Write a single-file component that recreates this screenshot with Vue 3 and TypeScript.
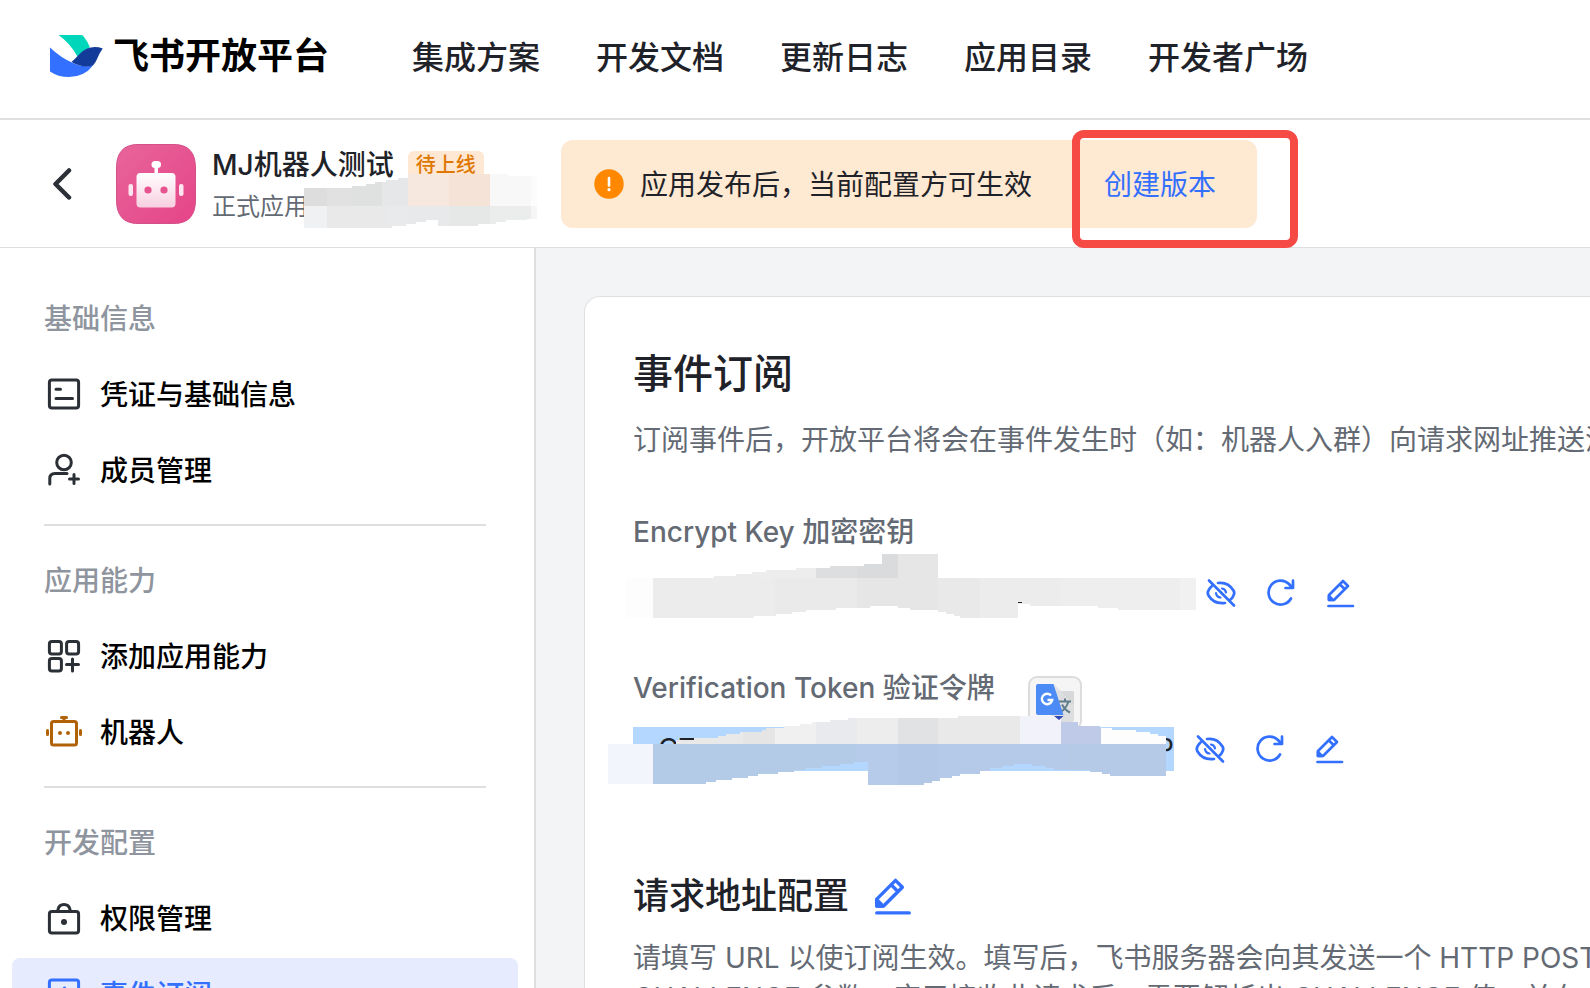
<script setup lang="ts">
interface NavItem {
  label: string
  icon: 'card' | 'member' | 'grid' | 'robot' | 'lock' | 'event'
  active?: boolean
}
interface NavGroup {
  title: string
  items: NavItem[]
}
type Cell = [x: number, y: number, w: number, h: number, fill: string]

const topLinks: string[] = ['集成方案', '开发文档', '更新日志', '应用目录', '开发者广场']

const groups: NavGroup[] = [
  {
    title: '基础信息',
    items: [
      { label: '凭证与基础信息', icon: 'card' },
      { label: '成员管理', icon: 'member' },
    ],
  },
  {
    title: '应用能力',
    items: [
      { label: '添加应用能力', icon: 'grid' },
      { label: '机器人', icon: 'robot' },
    ],
  },
  {
    title: '开发配置',
    items: [
      { label: '权限管理', icon: 'lock' },
      { label: '事件订阅', icon: 'event', active: true },
    ],
  },
]

const appCells: Cell[] = [
  [0, 0, 23, 32, '#dddddd'], [23, 0, 25, 32, '#e1e1e2'], [48, 0, 30, 32, '#dfe0e0'],
  [78, 0, 26, 32, '#e5e7e8'], [104, 0, 41, 32, '#f6e8df'], [145, 0, 41, 32, '#f5e3d8'],
  [186, 0, 41, 32, '#f8f8f9'], [227, 0, 6, 32, '#fcfcfc'],
  [0, 32, 23, 22, '#f0f1f2'], [23, 32, 60, 22, '#e9e9ea'], [83, 32, 21, 22, '#e8eaec'],
  [104, 32, 41, 22, '#e8e9ea'], [145, 32, 41, 22, '#e6e7e7'], [186, 32, 41, 22, '#ebecec'],
  [227, 32, 6, 22, '#f6f6f6'],
]

const keyCells: Cell[] = [
  [0, 24, 27, 40, '#fdfdfd'], [27, 16, 122, 48, '#ececec'], [130, 12, 60, 12, '#ededee'],
  [149, 24, 82, 40, '#e9eae9'], [190, 10, 41, 14, '#dddee0'], [231, 0, 41, 24, '#dadbdd'],
  [231, 24, 81, 40, '#e6e6e6'], [272, 0, 40, 24, '#e6e6e6'], [312, 24, 42, 40, '#e9e9e9'],
  [354, 24, 80, 40, '#ececec'], [434, 24, 120, 40, '#eeeeee'], [554, 24, 16, 40, '#f1f1f1'],
]

const tokenCells: Cell[] = [
  [45, 0, 90, 28, '#e9e9e9'], [135, 0, 32, 28, '#e5e5e5'], [167, 0, 41, 28, '#f0f0f0'],
  [208, 0, 41, 28, '#e9eaed'], [249, 0, 41, 28, '#ededed'], [290, 0, 40, 28, '#e1e2e4'],
  [330, 0, 40, 28, '#e8e9e8'], [370, 0, 42, 28, '#e9e9e9'], [412, 0, 41, 28, '#f2f3fa'],
  [453, 0, 40, 28, '#bfcae8'], [493, 0, 65, 28, '#fdfdfd'],
  [0, 28, 45, 41, '#f2f6fc'], [45, 28, 204, 41, '#b4cbe8'], [249, 28, 41, 41, '#b6cbea'],
  [290, 28, 40, 41, '#b3c8e7'], [330, 28, 130, 41, '#b5cae9'], [460, 28, 98, 41, '#b4cae7'],
]

const secrets = [
  { id: 'key', label: 'Encrypt Key 加密密钥' },
  { id: 'token', label: 'Verification Token 验证令牌' },
]
</script>

<template>
  <div class="page">
    <header class="topbar">
      <a class="brand" href="#">
        <svg class="logo" viewBox="0 0 53 42" aria-hidden="true">
          <path d="M8.500 0H31Q33 0 34 2Q38 7 40 12.500Q34 15 27.500 21.500Q20 8 8.500 0Z" fill="#00d6b9" />
          <path d="M0 12.500Q11 23 23 28Q34 33 43 30.500Q34 42 19 42Q8 42 0 36.500Z" fill="#3370ff" />
          <path d="M21.500 27Q26 23 30 18.500Q40 9 52.800 13.500Q50 17 47.500 23Q45.500 28 43 30.500Q33 33.500 21.500 27Z" fill="#133c9a" />
        </svg>
        <span>飞书开放平台</span>
      </a>
      <nav class="topnav">
        <a v-for="l in topLinks" :key="l" href="#">{{ l }}</a>
      </nav>
    </header>

    <div class="appbar">
      <button class="back" aria-label="返回">
        <svg viewBox="0 0 20 32"><path d="M17 2.500L3.500 16L17 29.500" fill="none" stroke="#2b2f36" stroke-width="4.500" stroke-linecap="round" stroke-linejoin="round" /></svg>
      </button>
      <svg class="avatar" viewBox="0 0 80 80" aria-hidden="true">
        <defs>
          <linearGradient id="pink" x1="0" y1="0" x2="1" y2="1"><stop offset="0" stop-color="#e8659a" /><stop offset="1" stop-color="#e54488" /></linearGradient>
          <linearGradient id="face" x1="0" y1="0" x2="0" y2="1"><stop offset="0" stop-color="#fff" /><stop offset="1" stop-color="#f8cfe0" /></linearGradient>
        </defs>
        <path d="M22 .5H58Q79.500 .5 79.500 24V56Q79.500 79.500 58 79.500H22Q.5 79.500 .5 56V24Q.5 .5 22 .5Z" fill="url(#pink)" stroke="#d4508a" />
        <rect x="20.500" y="29" width="39" height="34.500" rx="4" fill="url(#face)" />
        <rect x="38.500" y="20" width="3.500" height="10" fill="#fff" />
        <rect x="35.500" y="17" width="9.500" height="7" rx="3.500" fill="#fff" />
        <rect x="12.500" y="40" width="4.500" height="12" rx="2" fill="#fde6f0" />
        <rect x="63" y="40" width="4.500" height="12" rx="2" fill="#fde6f0" />
        <circle cx="32" cy="46" r="3.600" fill="#e5548e" /><circle cx="48" cy="46" r="3.600" fill="#e5548e" />
      </svg>
      <div class="appinfo">
        <div class="apptitle"><strong>MJ机器人测试</strong><span class="tag">待上线</span></div>
        <div class="appsub">正式应用</div>
        <svg class="mosaic mosaic-app" viewBox="0 0 233 54" aria-hidden="true">
          <clipPath id="clip-app"><path d="M0 14H48V12H62V10H71V8H82V6H94V4H104V0H204V2H233V45H223V46H202V48H192V50H174V52H134V46H122V48H112V50H102V52H88V54H0Z" /></clipPath>
          <g clip-path="url(#clip-app)" shape-rendering="crispEdges">
            <rect v-for="(c, i) in appCells" :key="i" :x="c[0]" :y="c[1]" :width="c[2]" :height="c[3]" :fill="c[4]" />
          </g>
        </svg>
      </div>
      <div class="notice" role="status">
        <svg class="warn" viewBox="0 0 32 32" aria-hidden="true"><circle cx="16" cy="16" r="14.700" fill="#ff8800" /><path d="M16 10V17.500" stroke="#fff" stroke-width="2.600" stroke-linecap="round" /><circle cx="16" cy="21.700" r="1.600" fill="#fff" /></svg>
        <span class="notice-text">应用发布后，当前配置方可生效</span>
        <a class="create" href="#">创建版本</a>
      </div>
    </div>

    <div class="body">
      <aside class="side">
        <section v-for="g in groups" :key="g.title" class="group">
          <h2>{{ g.title }}</h2>
          <a v-for="it in g.items" :key="it.label" href="#" class="item" :class="{ active: it.active, orange: it.icon === 'robot' }">
            <svg viewBox="0 0 36 36" fill="none" stroke="currentColor" stroke-width="3" stroke-linecap="round" stroke-linejoin="round" aria-hidden="true">
              <template v-if="it.icon === 'card'">
                <rect x="3.400" y="4" width="29.200" height="28" rx="2.500" /><path d="M10 13.200H14.500M10 22.500H26.500" />
              </template>
              <template v-else-if="it.icon === 'member'">
                <circle cx="18" cy="10.500" r="7.300" /><path d="M3.800 32V26.500Q3.800 21.500 9 21.500H21M23.500 27H32.500M28 22.500V31.500" />
              </template>
              <template v-else-if="it.icon === 'grid'">
                <rect x="3.400" y="3.400" width="12" height="12.500" rx="2.500" /><rect x="20.600" y="3.400" width="12" height="12.500" rx="2.500" /><rect x="3.400" y="20.500" width="12" height="12.500" rx="2.500" /><path d="M20.500 26.600H32.500M26.500 21V33" />
              </template>
              <template v-else-if="it.icon === 'robot'">
                <rect x="5.500" y="7.500" width="25" height="23.500" rx="2" /><path d="M15.500 3.500H20.500M18 3.500V7M1.500 16.500V20.500M34.500 16.500V20.500" />
                <circle cx="14" cy="19" r="2" fill="currentColor" stroke="none" /><circle cx="22" cy="19" r="2" fill="currentColor" stroke="none" />
              </template>
              <template v-else-if="it.icon === 'lock'">
                <rect x="3.400" y="11.500" width="29.200" height="21.500" rx="2.500" /><path d="M12 11V9.500Q13 4.500 18 4.500Q23 4.500 24 9.500V11" /><circle cx="18" cy="22" r="3" fill="currentColor" stroke="none" />
              </template>
              <template v-else>
                <rect x="3.400" y="4" width="29.200" height="28" rx="2.500" /><path d="M18.500 12L13 19H22L17 26" />
              </template>
            </svg>
            <span>{{ it.label }}</span>
          </a>
        </section>
      </aside>

      <main class="main">
        <div class="card">
          <h1>事件订阅</h1>
          <p class="lead">订阅事件后，开放平台将会在事件发生时（如：机器人入群）向请求网址推送消息</p>

          <section v-for="s in secrets" :key="s.id" class="secret">
            <h3>{{ s.label }}</h3>
            <div class="row">
              <div class="value" :class="s.id">
                <template v-if="s.id === 'key'">
                  <svg class="mosaic mosaic-key" viewBox="0 0 570 64" aria-hidden="true">
                    <clipPath id="clip-key"><path d="M0 24H88V22H110V20H126V18H140V16H170V14H204V12H238V10H256V0H312V24H570V56H492V54H472V52H404V50H392V64H334V62H328V60H320V58H312V56H284V54H272V52H244V54H210V56H180V58H166V60H150V62H128V64H0Z" /></clipPath>
                    <g clip-path="url(#clip-key)" shape-rendering="crispEdges">
                      <rect v-for="(c, i) in keyCells" :key="i" :x="c[0]" :y="c[1]" :width="c[2]" :height="c[3]" :fill="c[4]" />
                    </g>
                    <path d="M392 48.500H396" stroke="#1f2329" />
                  </svg>
                </template>
                <template v-else>
                  <span>CT</span><span>P</span>
                  <svg class="translate" viewBox="0 0 54 54" aria-hidden="true">
                    <rect x="1" y="1" width="52" height="52" rx="8" fill="#f5f5f5" stroke="#dcdcdc" stroke-width="2" />
                    <rect x="24" y="15" width="22" height="31" rx="2" fill="#dddedf" />
                    <path d="M26 8L46 29V15H28Z" fill="#d0d1d3" opacity=".5" />
                    <path d="M31 25.500H43M37 22.500V25.500M40.500 25.500Q38 33 32 36.500M34 28.500Q37 34 42 36.500" fill="none" stroke="#607d8b" stroke-width="2" />
                    <path d="M10 8H25.500L35.500 39H10Q8 39 8 37V10Q8 8 10 8Z" fill="#4c8bf5" />
                    <path d="M23 19.500A5.200 5.200 0 1 0 24.200 24H19.500" fill="none" stroke="#fff" stroke-width="2.400" />
                  </svg>
                  <svg class="mosaic mosaic-token" viewBox="0 0 558 69" aria-hidden="true">
                    <clipPath id="clip-token"><path d="M0 28H68V24H86V22H110V20H118V18H132V16H154V14H158V12H176V10H192V8H204V6H222V4H240V2H350V0H453V6H470V10H492V12H504V14H528V16H542V18H550V20H558V60H502V58H494V56H482V54H446V52H438V50H424V48H406V50H394V52H382V55H372V58H352V60H344V62H332V65H324V67H316V69H260V46H246V48H232V50H214V52H198V54H186V56H170V58H150V60H140V62H124V64H108V66H98V68H0Z" /></clipPath>
                    <g clip-path="url(#clip-token)" shape-rendering="crispEdges">
                      <rect v-for="(c, i) in tokenCells" :key="i" :x="c[0]" :y="c[1]" :width="c[2]" :height="c[3]" :fill="c[4]" />
                    </g>
                    <path d="M446 0H455.500L451 4Z" fill="#3049b5" />
                  </svg>
                </template>
              </div>
              <div class="tools">
                <button aria-label="显示">
                  <svg viewBox="0 0 32 32" fill="none" stroke="currentColor" stroke-width="2.700" stroke-linecap="round">
                    <path d="M4 3.500L29 28.500M13 6Q23 4.500 28.500 13.500Q30 16 28.500 18.500Q27.500 21 25.500 22.500M20 26Q9 27.500 3.500 18.500Q2 16 3.500 13.500Q4.500 11.500 6.500 9.500" />
                    <path d="M17 11.500Q20.500 12 21 15.500M11 16Q11.500 20 15.500 20.500" stroke-width="2.200" />
                  </svg>
                </button>
                <button aria-label="重置">
                  <svg viewBox="0 0 32 32" fill="none" stroke="currentColor" stroke-width="2.700" stroke-linecap="round" stroke-linejoin="round">
                    <path d="M26 21.500A12 12 0 1 1 24 7L27 10.500M28 3.500V11H20.500" />
                  </svg>
                </button>
                <button aria-label="编辑">
                  <svg viewBox="0 0 32 32" fill="none" stroke="currentColor" stroke-width="2.700" stroke-linejoin="round" stroke-linecap="round">
                    <path d="M3.500 29H28" /><path d="M4 18L18 4L23 9L9 23H4ZM15 7.500L19.500 12" /><path d="M4 19V23H8Z" fill="currentColor" />
                  </svg>
                </button>
              </div>
            </div>
          </section>

          <div class="address">
            <h2>请求地址配置</h2>
            <button aria-label="编辑请求地址">
              <svg viewBox="0 0 32 32" fill="none" stroke="currentColor" stroke-width="2.700" stroke-linejoin="round" stroke-linecap="round">
                <path d="M3 29.500H29" /><path d="M3 18.500L18 3.500L23.500 9L8.500 24H3ZM15 7.500L19.500 12" /><path d="M3 19V24H8Z" fill="currentColor" />
              </svg>
            </button>
          </div>
          <p class="desc">请填写 URL 以使订阅生效。填写后，飞书服务器会向其发送一个 HTTP POST 请求，包含<br />CHALLENGE 参数，应用接收此请求后，需要解析出 CHALLENGE 值，并在 1 秒内返回</p>
        </div>
      </main>
    </div>
  </div>
</template>

<style>
body {
  margin: 0;
  background: #fff;
}
</style>

<style scoped>
.page {
  height: 100vh;
  display: flex;
  flex-direction: column;
  overflow: hidden;
  box-sizing: border-box;
  font-family: Inter, "Noto Sans CJK SC", sans-serif;
  font-size: 28px;
  line-height: 40px;
  color: #1f2329;
  white-space: nowrap;
}
.page *,
.page *::before {
  box-sizing: border-box;
}
h1,
h2,
h3,
p {
  margin: 0;
  font-weight: 500;
}
a {
  color: inherit;
  text-decoration: none;
}
button {
  padding: 0;
  border: 0;
  background: none;
  color: #3370ff;
  cursor: pointer;
}
svg {
  display: block;
  flex: none;
}
button svg {
  width: 100%;
  height: 100%;
}
.topbar {
  flex: none;
  display: flex;
  align-items: center;
  height: 120px;
  padding: 0 50px 6px;
  border-bottom: 2px solid #dedfe0;
}
.brand {
  display: flex;
  align-items: center;
  gap: 10px;
  color: #000;
  font-size: 36px;
  font-weight: 700;
}
.logo {
  width: 53px;
  height: 42px;
}
.topnav {
  display: flex;
  gap: 56px;
  margin-left: 83px;
  padding-top: 4px;
  font-size: 32px;
  font-weight: 500;
}
.appbar {
  flex: none;
  display: flex;
  align-items: center;
  height: 128px;
  padding: 0 52px;
  border-bottom: 1px solid #dedfe0;
}
.back {
  width: 20px;
  height: 32px;
  margin-right: 44px;
}
.avatar {
  width: 80px;
  height: 80px;
}
.appinfo {
  position: relative;
  width: 365px;
  padding: 4px 0 0 16px;
}
.apptitle {
  display: flex;
  align-items: center;
  gap: 14px;
}
.apptitle strong {
  font-weight: 500;
}
.tag {
  padding: 0 8px;
  border-radius: 6px;
  background: #fee7d3;
  color: #de7802;
  font-size: 20px;
  font-weight: 500;
  line-height: 28px;
}
.appsub {
  margin-top: 2px;
  color: #646a73;
  font-size: 24px;
}
.mosaic {
  position: absolute;
}
.mosaic-app {
  left: 108px;
  top: 33px;
  width: 233px;
  height: 54px;
}
.notice {
  position: relative;
  display: flex;
  align-items: center;
  height: 88px;
  padding: 0 41px 0 32px;
  border-radius: 12px;
  background: #fee9d2;
}
.warn {
  width: 32px;
  height: 32px;
  margin-right: 15px;
}
.notice-text,
.create {
  padding-top: 2px;
}
.create {
  margin-left: 72px;
  color: #3370ff;
}
.notice::after {
  content: "";
  position: absolute;
  top: -10px;
  right: -41px;
  width: 226px;
  height: 118px;
  border: 8px solid #f64a45;
  border-radius: 12px;
  box-sizing: border-box;
  pointer-events: none;
}
.body {
  flex: 1;
  min-height: 0;
  display: flex;
}
.side {
  flex: none;
  width: 536px;
  padding: 32px 16px 0 12px;
  border-right: 2px solid #dedfe0;
  overflow: hidden;
}
.group h2 {
  padding: 19px 32px;
  color: #8f959e;
  font-size: 28px;
}
.group + .group::before {
  content: "";
  display: block;
  height: 2px;
  margin: 18px 32px 16px;
  background: #dedfe0;
}
.item {
  display: flex;
  align-items: center;
  gap: 18px;
  height: 72px;
  padding: 0 34px;
  border-radius: 8px;
  color: #2b2f36;
  font-weight: 500;
}
.item span {
  padding-top: 2px;
  color: #000;
}
.item + .item {
  margin-top: 4px;
}
.item svg {
  width: 36px;
  height: 36px;
}
.item.orange {
  color: #b26206;
}
.item.active,
.item.active span {
  color: #3370ff;
}
.item.active {
  background: #e6ebfe;
}
.main {
  flex: 1;
  min-width: 0;
  padding: 48px 0 0 48px;
  background: #f3f4f6;
  overflow: hidden;
}
.card {
  height: 100%;
  padding: 49px 0 48px 48px;
  border: 1px solid #dee0e3;
  border-right: 0;
  border-bottom: 0;
  border-radius: 16px 0 0 0;
  background: #fff;
  overflow: hidden;
}
h1 {
  font-size: 40px;
  line-height: 56px;
}
.lead {
  margin-top: 19px;
  color: #646a73;
  font-weight: 400;
  line-height: 38px;
}
.secret {
  padding-top: 53px;
}
.secret h3 {
  color: #646a73;
  font-size: 28px;
}
.row {
  display: flex;
  align-items: center;
  gap: 20px;
  height: 44px;
  margin-top: 19px;
}
.value {
  position: relative;
  display: flex;
  justify-content: space-between;
  align-items: center;
  height: 44px;
}
.value.key {
  width: 552px;
}
.value.token {
  width: 541px;
  padding-left: 25px;
  background: #b3d7ff;
}
.mosaic-key {
  left: -7px;
  top: -17px;
  width: 570px;
  height: 64px;
}
.mosaic-token {
  left: -25px;
  top: -11px;
  width: 558px;
  height: 69px;
}
.translate {
  position: absolute;
  left: 395px;
  top: -51px;
  width: 54px;
  height: 54px;
}
.tools {
  display: flex;
  gap: 28px;
}
.tools button {
  width: 32px;
  height: 32px;
}
.address {
  display: flex;
  align-items: center;
  gap: 24px;
  margin-top: 99px;
}
.address h2 {
  font-size: 36px;
  line-height: 52px;
}
.address button {
  width: 40px;
  height: 40px;
}
.desc {
  margin-top: 16px;
  color: #646a73;
  font-weight: 400;
}
</style>
